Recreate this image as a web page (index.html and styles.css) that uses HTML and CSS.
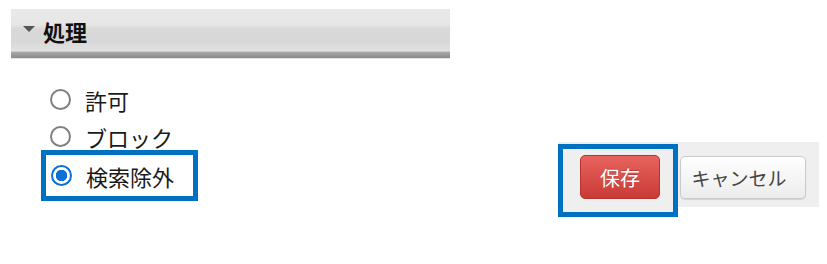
FILE: index.html
```html
<!DOCTYPE html>
<html>
<head>
    <title>処理</title>
    <link rel="stylesheet" href="styles.css">
</head>
<body>
<div class="panel-head">
    <span class="caret"></span>
    <span class="panel-title">処理</span>
</div>

<div class="content">
    <div class="options">
        <label class="option">
            <span class="radio"></span>
            <span>許可</span>
        </label>
        <label class="option">
            <span class="radio"></span>
            <span>ブロック</span>
        </label>
        <label class="option selected">
            <span class="radio checked"></span>
            <span>検索除外</span>
        </label>
    </div>

    <div class="actions">
        <div class="mark">
            <button type="button" class="btn btn-save">保存</button>
        </div>
        <button type="button" class="btn btn-cancel">キャンセル</button>
    </div>
</div>
</body>
</html>
```

FILE: styles.css
```css
body {
    margin: 0;
    font-family: "Noto Sans CJK JP", "Noto Sans", sans-serif;
    color: #1a1a1a;
    background: #fff;
}

.panel-head {
    display: flex;
    align-items: center;
    margin: 9px 0 0 11px;
    width: 439px;
    height: 50px;
    padding: 0 0 6px 12px;
    box-sizing: border-box;
    background: linear-gradient(#e9e9e9 0, #e6e6e6 32%, #d9d9d9 40%, #d8d8d8 66%, #e1e1e1 86%, #a8a8a8 88%, #8a8a8a 100%);
    border-bottom: 1px solid #e4e4e4;
}

.caret {
    width: 0;
    height: 0;
    border-left: 6px solid transparent;
    border-right: 6px solid transparent;
    border-top: 6px solid #555;
    margin: 0 8px 4px 0;
}

.panel-title {
    font-size: 22px;
    font-weight: bold;
    color: #111;
}

.content {
    display: flex;
    align-items: flex-start;
    margin-top: 22px;
}

.options {
    display: flex;
    flex-direction: column;
    align-items: flex-start;
    margin-left: 50px;
}

.option {
    display: flex;
    align-items: center;
    gap: 14px;
    height: 37px;
    font-size: 22px;
    cursor: pointer;
}

.option.selected {
    width: 157px;
    height: 51px;
    box-sizing: border-box;
    margin: -5px 0 0 -9px;
    padding-left: 5px;
    border: 5px solid #0070c0;
}

.radio {
    width: 21px;
    height: 21px;
    box-sizing: border-box;
    border: 2px solid #808080;
    border-radius: 50%;
    background: #fff;
}

.radio.checked {
    border-color: #0b6fd4;
    background: radial-gradient(circle, #0b6fd4 0, #0b6fd4 5.5px, #fff 6px);
}

.actions {
    display: flex;
    align-items: flex-start;
    margin: 61px 8px 0 auto;
    padding: 2px 13px 0 0;
    background: linear-gradient(#efefef 65px, transparent 65px);
}

.mark {
    height: 73px;
    box-sizing: border-box;
    padding: 6px 13px 0 17px;
    border: 5px solid #0070c0;
    background: #efefef;
}

.btn {
    font-family: "Noto Sans CJK JP", "Noto Sans", sans-serif;
    border-radius: 5px;
    cursor: pointer;
}

.btn-save {
    width: 80px;
    height: 44px;
    font-size: 20px;
    color: #fff;
    background: linear-gradient(#e8645e, #c93a35);
    border: 1px solid #b9332e;
    text-shadow: 0 -1px 0 rgba(0, 0, 0, 0.2);
}

.btn-cancel {
    width: 126px;
    height: 43px;
    margin: 12px 0 0 2px;
    padding: 0 8px 0 0;
    font-size: 19px;
    color: #444;
    background: linear-gradient(#ffffff, #ececec);
    border: 1px solid #cacaca;
    box-shadow: 0 1px 1px rgba(0, 0, 0, 0.12);
}
```
